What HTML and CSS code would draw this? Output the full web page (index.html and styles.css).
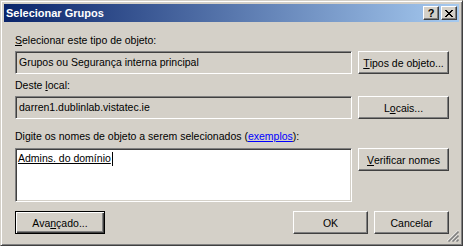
FILE: index.html
```html
<!DOCTYPE html>
<html>
<head>
<meta charset="utf-8">
<link rel="stylesheet" href="styles.css">
</head>
<body>
<div class="window">
  <div class="titlebar">
    <span class="title">Selecionar Grupos</span>
    <div class="tbtns">
      <span class="tbtn help">?</span>
      <span class="tbtn close">
        <svg width="8" height="7" viewBox="0 0 8 7" shape-rendering="crispEdges"><path fill="#000" d="M0 0h2v1H0zM6 0h2v1H6zM1 1h2v1H1zM5 1h2v1H5zM2 2h4v1H2zM3 3h2v1H3zM2 4h4v1H2zM1 5h2v1H1zM5 5h2v1H5zM0 6h2v1H0zM6 6h2v1H6z"/></svg>
      </span>
    </div>
  </div>
  <div class="client">
    <div class="label"><u>S</u>elecionar este tipo de objeto:</div>
    <div class="row">
      <div class="field ro">Grupos ou Segurança interna principal</div>
      <div class="btn side"><u>T</u>ipos de objeto...</div>
    </div>
    <div class="label l2">Deste <u>l</u>ocal:</div>
    <div class="row">
      <div class="field ro">darren1.dublinlab.vistatec.ie</div>
      <div class="btn side">L<u>o</u>cais...</div>
    </div>
    <div class="label l3">Di<u>g</u>ite os nomes de objeto a serem selecionados (<a class="link">exemplos</a>):</div>
    <div class="row top">
      <div class="field edit"><span class="name">Admins. do domínio</span><span class="caret"></span></div>
      <div class="btn side"><u>V</u>erificar nomes</div>
    </div>
    <div class="bottom">
      <div class="btn default adv">Ava<u>n</u>çado...</div>
      <div class="spacer"></div>
      <div class="btn std">OK</div>
      <div class="btn std">Cancelar</div>
    </div>
    <svg class="grip" width="12" height="12" viewBox="0 0 12 12">
      <path stroke="#fff" stroke-width="1" d="M11 0.5L0.5 11M11 4.5L4.5 11M11 8.5L8.5 11"/>
      <path stroke="#808080" stroke-width="1.6" d="M11.5 1.5L1.5 11.5M11.5 5.5L5.5 11.5M11.5 9.5L9.5 11.5"/>
    </svg>
  </div>
</div>
</body>
</html>
```
FILE: styles.css
```css
body {
  margin: 0;
  font-family: "Liberation Sans", Arial, sans-serif;
  font-size: 10.5px;
  color: #000;
}
.window {
  box-sizing: border-box;
  width: 463px;
  height: 246px;
  background: #d4d0c8;
  border: 1px solid;
  border-color: #d4d0c8 #404040 #404040 #d4d0c8;
  box-shadow: inset 1px 1px #fff, inset -1px -1px #808080;
  padding: 3px;
  display: flex;
  flex-direction: column;
}
.titlebar {
  height: 18px;
  flex: none;
  background: linear-gradient(to right, #0a246a, #a6caf0);
  display: flex;
  align-items: center;
  padding: 0 2px 0 2px;
}
.title {
  flex: 1;
  color: #fff;
  font-weight: bold;
  font-size: 11px;
  line-height: 13px;
}
.tbtns {
  display: flex;
  gap: 2px;
}
.tbtn {
  box-sizing: border-box;
  width: 16px;
  height: 14px;
  background: #d4d0c8;
  border: 1px solid;
  border-color: #fff #404040 #404040 #fff;
  box-shadow: inset -1px -1px #808080;
  display: flex;
  align-items: center;
  justify-content: center;
}
.help {
  font-weight: bold;
  font-size: 11px;
  line-height: 11px;
  padding-top: 1px;
}
.close svg { display: block; }
.client {
  flex: 1;
  position: relative;
  padding: 12px 10px 0 11px;
}
.label {
  height: 13px;
  line-height: 13px;
  margin-bottom: 4px;
  white-space: nowrap;
}
.l2 { margin-top: 5px; }
.l3 { margin-top: 11px; margin-bottom: 5px; }
.link {
  color: #0000ff;
  text-decoration: underline;
}
.row {
  display: flex;
  gap: 6px;
}
.row.top { align-items: flex-start; }
.field {
  box-sizing: border-box;
  width: 337px;
  height: 23px;
  border: 1px solid;
  border-color: #808080 #fff #fff #808080;
  box-shadow: inset 1px 1px #404040, inset -1px -1px #d4d0c8;
  padding: 0 3px;
  line-height: 21px;
  white-space: nowrap;
}
.ro { background: #d4d0c8; }
.edit {
  background: #fff;
  height: 54px;
  line-height: 13px;
  padding: 3px 2px;
  display: flex;
  align-items: flex-start;
}
.name { text-decoration: underline; }
.caret {
  width: 1px;
  height: 14px;
  background: #000;
  margin-left: 1px;
}
.btn {
  box-sizing: border-box;
  height: 23px;
  background: #d4d0c8;
  border: 1px solid;
  border-color: #fff #404040 #404040 #fff;
  box-shadow: inset -1px -1px #808080;
  display: flex;
  align-items: center;
  justify-content: center;
  white-space: nowrap;
}
.side { width: 91px; }
.std { width: 75px; }
.adv { width: 90px; }
.default {
  border-color: #000;
  box-shadow: inset 1px 1px #fff, inset -1px -1px #404040, inset -2px -2px #808080;
}
.bottom {
  display: flex;
  gap: 6px;
  margin-top: 9px;
}
.spacer { flex: 1; }
.grip {
  position: absolute;
  right: 0;
  bottom: 0;
}
```
